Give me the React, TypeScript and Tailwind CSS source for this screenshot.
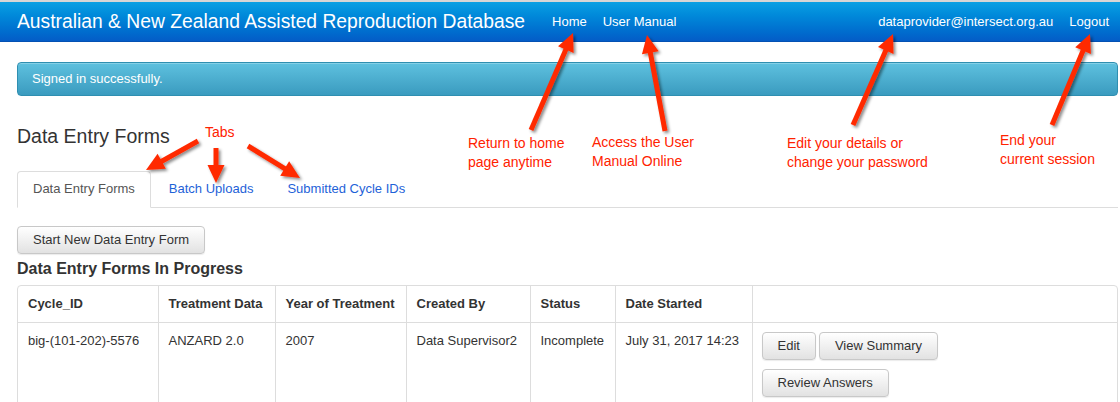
import React from 'react';

type Pt = [number, number];

// red callout arrow: shaft + triangular head, tip is the pointed end
const Arrow: React.FC<{ from: Pt; to: Pt; head?: number; width?: number }> = ({ from, to, head = 18, width = 17 }) => {
  const dx = to[0] - from[0];
  const dy = to[1] - from[1];
  const len = Math.hypot(dx, dy);
  const ux = dx / len;
  const uy = dy / len;
  const bx = to[0] - ux * head;
  const by = to[1] - uy * head;
  const nx = -uy * (width / 2);
  const ny = ux * (width / 2);
  const pts = `${to[0]},${to[1]} ${bx + nx},${by + ny} ${bx - nx},${by - ny}`;
  return (
    <g filter="url(#arrowShadow)">
      <line x1={from[0]} y1={from[1]} x2={bx + ux * 2} y2={by + uy * 2} stroke="#ff2a00" strokeWidth={5} />
      <polygon points={pts} fill="#ff2a00" />
    </g>
  );
};

const arrows: { from: Pt; to: Pt }[] = [
  { from: [531, 130], to: [573, 33] },
  { from: [665, 131], to: [647, 35] },
  { from: [853, 125], to: [893, 34] },
  { from: [1052, 125], to: [1090, 34] },
  { from: [198, 141], to: [146, 170] },
  { from: [216, 148], to: [216, 183] },
  { from: [248, 146], to: [300, 178] },
];

const Btn: React.FC<{ children: React.ReactNode; className?: string }> = ({ children, className = '' }) => (
  <button
    className={`h-[28px] px-[15px] rounded-[4px] border border-[#c8c8c8] bg-linear-to-b from-white to-[#e2e2e2] text-[13px] text-[#333] shadow-[0_1px_1px_rgba(0,0,0,0.08)] ${className}`}
  >
    {children}
  </button>
);

const Note: React.FC<{ className: string; children: React.ReactNode }> = ({ className, children }) => (
  <div className={`absolute text-[14px] leading-[19px] text-[#ff2200] ${className}`}>{children}</div>
);

const cell = 'px-[10px] pt-[8px] leading-[19px] whitespace-nowrap';

const App: React.FC = () => {
  return (
    <div className="relative w-[1120px] h-[402px] overflow-hidden bg-white font-['Liberation_Sans',Arial,sans-serif] text-[#333]">
      {/* Navbar */}
      <div className="h-[42px] border-t-2 border-[#d6d6d6] border-b border-b-[#0451b3] bg-linear-to-b from-[#0ba0e3] to-[#045cc7] flex items-center text-white">
        <div className="pl-[17px] text-[19.3px] leading-none">Australian &amp; New Zealand Assisted Reproduction Database</div>
        <div className="ml-[27px] flex gap-4 text-[13px]">
          <span>Home</span>
          <span>User Manual</span>
        </div>
        <div className="ml-auto pr-[11px] flex gap-4 text-[13px]">
          <span>dataprovider@intersect.org.au</span>
          <span>Logout</span>
        </div>
      </div>

      <div className="pl-[17px] pr-[2px]">
        {/* Alert */}
        <div className="mt-[20px] h-[34px] rounded-[4px] border border-[#2f8fb1] bg-linear-to-b from-[#5ec1df] to-[#3a9bbf] flex items-center pl-[14px] text-[13px] text-white shadow-[inset_0_1px_0_rgba(255,255,255,0.25)]">
          Signed in successfully.
        </div>

        <h1 className="mt-[29px] text-[19.5px] leading-[22px] text-[#333]">Data Entry Forms</h1>

        {/* Tabs */}
        <div className="mt-[24px] flex border-b border-[#ddd] text-[13px] leading-[18px]">
          <div className="-mb-px mr-[2px] px-[15px] py-2 border border-[#ddd] border-b-white rounded-t-[4px] bg-white text-[#555]">
            Data Entry Forms
          </div>
          <div className="mr-[2px] px-[15px] py-2 border border-transparent text-[#1e62d8]">Batch Uploads</div>
          <div className="mr-[2px] px-[15px] py-2 border border-transparent text-[#1e62d8]">Submitted Cycle IDs</div>
        </div>

        <Btn className="mt-[18px] h-[27px]">Start New Data Entry Form</Btn>

        <h2 className="mt-[6px] text-[16px] leading-[18px] font-bold text-[#333]">Data Entry Forms In Progress</h2>

        {/* Table */}
        <div className="mt-[7px] border border-[#ddd] rounded-[4px] overflow-hidden h-[140px]">
          <table className="w-full table-fixed border-collapse text-[13px]">
            <colgroup>
              <col className="w-[140px]" />
              <col className="w-[117px]" />
              <col className="w-[131px]" />
              <col className="w-[124px]" />
              <col className="w-[85px]" />
              <col className="w-[137px]" />
              <col />
            </colgroup>
            <thead>
              <tr className="border-b border-[#ddd]">
                {['Cycle_ID', 'Treatment Data', 'Year of Treatment', 'Created By', 'Status', 'Date Started', ''].map((h, i) => (
                  <th
                    key={i}
                    className={`text-left font-bold px-[10px] py-2 leading-[20px] whitespace-nowrap ${i > 0 ? 'border-l border-[#ddd]' : ''}`}
                  >
                    {h}
                  </th>
                ))}
              </tr>
            </thead>
            <tbody>
              <tr className="align-top">
                <td className={`${cell} h-[110px]`}>big-(101-202)-5576</td>
                <td className={`${cell} border-l border-[#ddd]`}>ANZARD 2.0</td>
                <td className={`${cell} border-l border-[#ddd]`}>2007</td>
                <td className={`${cell} border-l border-[#ddd]`}>Data Supervisor2</td>
                <td className={`${cell} border-l border-[#ddd]`}>Incomplete</td>
                <td className={`${cell} border-l border-[#ddd]`}>July 31, 2017 14:23</td>
                <td className="pl-[9px] pt-[9px] border-l border-[#ddd]">
                  <div className="flex gap-[3px]">
                    <Btn>Edit</Btn>
                    <Btn>View Summary</Btn>
                  </div>
                  <div className="mt-[9px] flex">
                    <Btn>Review Answers</Btn>
                  </div>
                </td>
              </tr>
            </tbody>
          </table>
        </div>
      </div>

      {/* Annotation overlay */}
      <svg className="absolute inset-0 pointer-events-none" width={1120} height={402}>
        <defs>
          <filter id="arrowShadow" x="-30%" y="-30%" width="160%" height="160%">
            <feDropShadow dx="2" dy="2" stdDeviation="1.5" floodColor="#000" floodOpacity="0.45" />
          </filter>
        </defs>
        {arrows.map((a, i) => (
          <Arrow key={i} from={a.from} to={a.to} />
        ))}
      </svg>
      <Note className="left-[205px] top-[123px] text-[13px]">Tabs</Note>
      <Note className="left-[468px] top-[134px]">Return to home<br />page anytime</Note>
      <Note className="left-[592px] top-[133px]">Access the User<br />Manual Online</Note>
      <Note className="left-[787px] top-[134px]">Edit your details or<br />change your password</Note>
      <Note className="left-[1000px] top-[131px]">End your<br />current session</Note>
    </div>
  );
};

export default App;
